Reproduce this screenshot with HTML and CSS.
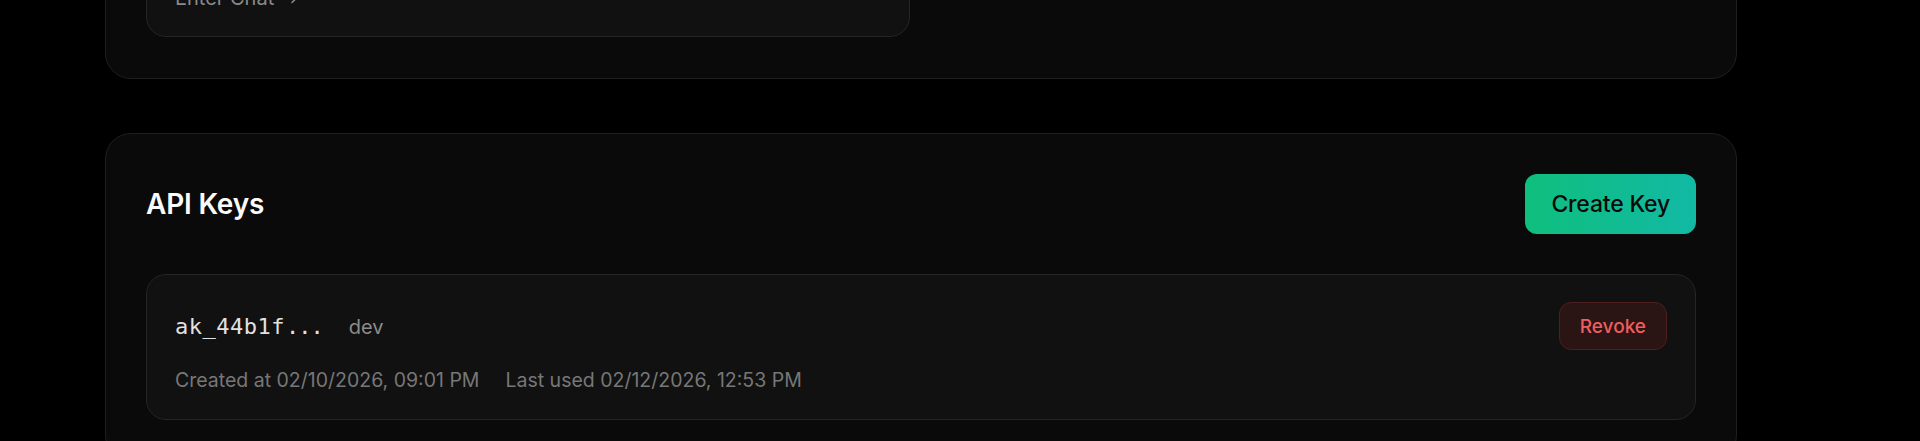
FILE: index.html
```html
<!DOCTYPE html>
<html lang="en">
<head>
<meta charset="utf-8">
<title>Settings</title>
<link rel="stylesheet" href="styles.css">
</head>
<body>
<main class="page">
  <section class="panel panel-top">
    <div class="chat-grid">
      <div class="chat-card">
        <a class="chat-link" href="#">Enter Chat
          <svg class="chev" viewBox="0 0 16 16" width="16" height="16" aria-hidden="true"><path d="M6 3.5L10.5 8L6 12.5" fill="none" stroke="currentColor" stroke-width="1.6" stroke-linecap="round" stroke-linejoin="round"/></svg>
        </a>
      </div>
    </div>
  </section>

  <section class="panel">
    <header class="panel-head">
      <h2 class="panel-title">API Keys</h2>
      <button class="btn-create" type="button">Create Key</button>
    </header>
    <div class="key-list">
      <div class="key-card">
        <div class="key-row">
          <div class="key-id">
            <span class="key-prefix">ak_44b1f</span><span class="key-dots">...</span>
            <span class="key-name">dev</span>
          </div>
          <button class="btn-revoke" type="button">Revoke</button>
        </div>
        <div class="key-meta">
          <span>Created at 02/10/2026, 09:01 PM</span>
          <span>Last used 02/12/2026, 12:53 PM</span>
        </div>
      </div>
    </div>
  </section>
</main>
</body>
</html>
```
FILE: styles.css
```css
* { box-sizing: border-box; }

html, body {
  margin: 0;
  background: #000;
  font-family: Inter, "Noto Sans", "Liberation Sans", sans-serif;
  color: #fafafa;
}

.page {
  display: flex;
  flex-direction: column;
  gap: 54px;
  padding: 0 183px 0 105px;
  margin-top: -90px;
}

.panel {
  background: #0a0a0a;
  border: 1px solid #1f1f1f;
  border-radius: 26px;
  padding: 40px;
}

.panel-top { padding-bottom: 41px; }

.chat-grid {
  display: grid;
  grid-template-columns: 1fr 1fr;
  gap: 22px;
}

.chat-card {
  background: #111111;
  border: 1px solid #252525;
  border-radius: 20px;
  padding: 32px 28px 24px;
}

.chat-link {
  display: inline-flex;
  align-items: center;
  gap: 12px;
  color: #8a8a8a;
  text-decoration: none;
  font-size: 20px;
  line-height: 28px;
}

.chev { display: block; }

.panel-head {
  display: flex;
  align-items: center;
  justify-content: space-between;
  height: 60px;
}

.panel-title {
  margin: 0;
  font-size: 28px;
  font-weight: 600;
  letter-spacing: -0.2px;
  color: #fafafa;
}

.btn-create {
  height: 60px;
  padding: 0 26px;
  border: 0;
  border-radius: 12px;
  background: linear-gradient(90deg, #0fbf7d, #12b9a4);
  color: #0a0a0a;
  font-family: inherit;
  font-size: 23px;
  font-weight: 500;
  letter-spacing: -0.2px;
}

.key-list {
  margin-top: 40px;
  display: flex;
  flex-direction: column;
  gap: 16px;
}

.key-card {
  background: #111111;
  border: 1px solid #252525;
  border-radius: 20px;
  padding: 27px 28px 25px;
}

.key-row {
  display: flex;
  align-items: center;
  justify-content: space-between;
  height: 48px;
}

.key-id {
  display: flex;
  align-items: baseline;
}

.key-prefix,
.key-dots {
  font-family: "DejaVu Sans Mono", "Liberation Mono", monospace;
  font-size: 22px;
  color: #e2e2e2;
}

.key-prefix { letter-spacing: 0.5px; }
.key-dots { letter-spacing: -1px; margin-left: 1px; }

.key-name {
  margin-left: 26px;
  font-size: 20px;
  color: #8c8c8c;
}

.btn-revoke {
  height: 48px;
  padding: 0 20px;
  border: 1px solid #4d1f1f;
  border-radius: 12px;
  background: #2a1414;
  color: #ef5d5d;
  font-family: inherit;
  font-size: 19px;
  font-weight: 500;
}

.key-meta {
  margin-top: 16px;
  display: flex;
  gap: 26px;
  font-size: 19.5px;
  line-height: 28px;
  color: #777777;
}
```
